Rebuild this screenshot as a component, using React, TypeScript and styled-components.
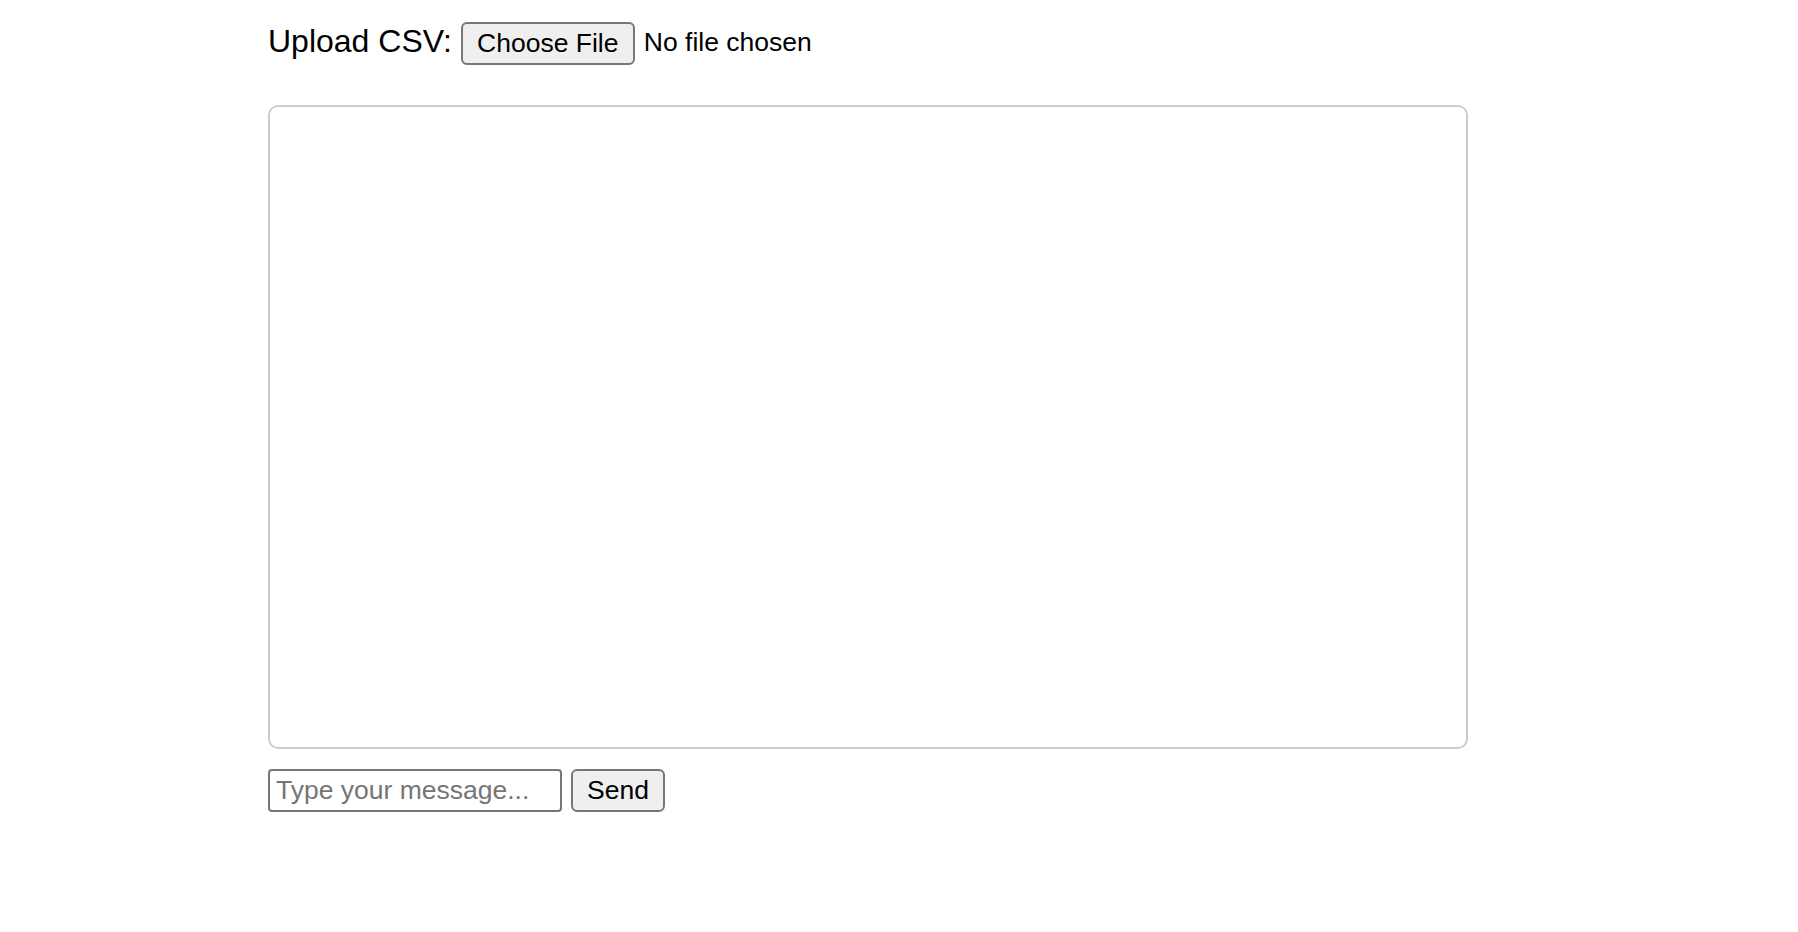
import styled, { createGlobalStyle } from "styled-components";

const GlobalStyle = createGlobalStyle`
  html, body {
    margin: 0;
    padding: 0;
    background: #ffffff;
  }
  body {
    font-family: "Liberation Sans", Arial, Helvetica, sans-serif;
    color: #000000;
  }
`;

const Page = styled.div`
  box-sizing: border-box;
  width: 1798px;
  min-height: 932px;
  padding: 22px 0 0 268px;
`;

const UploadRow = styled.div`
  display: flex;
  align-items: center;
  height: 42px;
`;

const UploadLabel = styled.label`
  font-size: 32px;
  line-height: 1;
  margin-right: 9px;
  margin-top: -4px;
`;

const HiddenFileInput = styled.input`
  position: absolute;
  width: 1px;
  height: 1px;
  opacity: 0;
  overflow: hidden;
`;

const FileButton = styled.label`
  box-sizing: border-box;
  display: inline-flex;
  align-items: center;
  justify-content: center;
  width: 174px;
  height: 43px;
  font-size: 26.5px;
  background: #efefef;
  border: 2px solid #767676;
  border-radius: 6px;
  cursor: default;
  margin-right: 9px;
`;

const FileStatus = styled.span`
  font-size: 26.5px;
  margin-top: -2px;
`;

const ChatBox = styled.div`
  box-sizing: border-box;
  width: 1200px;
  height: 644px;
  margin-top: 41px;
  border: 2px solid #cccccc;
  border-radius: 10px;
  overflow-y: auto;
`;

const MessageRow = styled.form`
  display: flex;
  gap: 9px;
  margin-top: 20px;
`;

const MessageInput = styled.input`
  box-sizing: border-box;
  width: 294px;
  height: 43px;
  padding: 0 6px;
  font-family: "Liberation Sans", Arial, sans-serif;
  font-size: 26.5px;
  color: #000000;
  border: 2px solid #767676;
  border-radius: 4px;
  outline: none;

  &::placeholder {
    color: #757575;
  }
`;

const SendButton = styled.button`
  box-sizing: border-box;
  width: 94px;
  height: 43px;
  padding: 0;
  font-family: "Liberation Sans", Arial, sans-serif;
  font-size: 26.5px;
  color: #000000;
  background: #efefef;
  border: 2px solid #767676;
  border-radius: 6px;
`;

export default function App() {
  return (
    <>
      <GlobalStyle />
      <Page>
        <UploadRow>
          <UploadLabel htmlFor="csv-upload">Upload CSV:</UploadLabel>
          <HiddenFileInput id="csv-upload" type="file" accept=".csv" />
          <FileButton htmlFor="csv-upload">Choose File</FileButton>
          <FileStatus>No file chosen</FileStatus>
        </UploadRow>
        <ChatBox />
        <MessageRow onSubmit={(e) => e.preventDefault()}>
          <MessageInput type="text" placeholder="Type your message..." />
          <SendButton type="submit">Send</SendButton>
        </MessageRow>
      </Page>
    </>
  );
}
